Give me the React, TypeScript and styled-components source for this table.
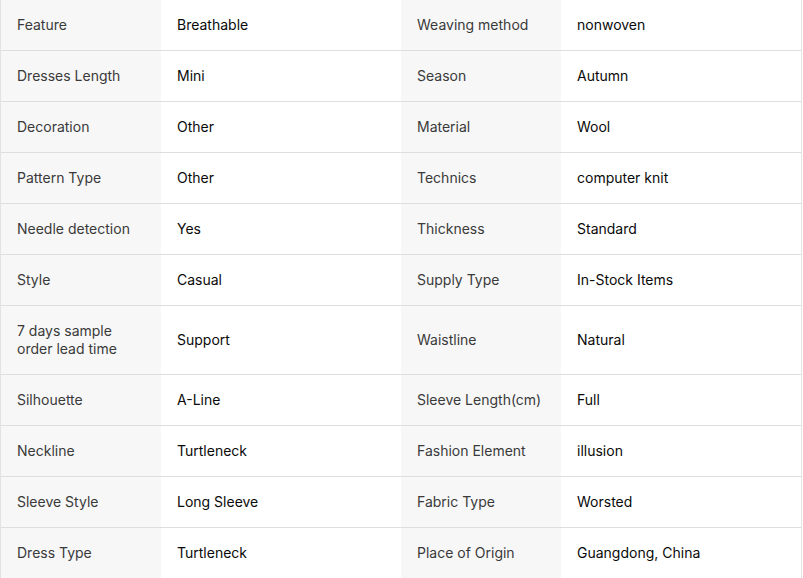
import React from "react";
import styled, { createGlobalStyle } from "styled-components";

const Global = createGlobalStyle`
  html, body { margin: 0; padding: 0; background: #fff; }
  body { font-family: Inter, "Noto Sans", sans-serif; }
`;

const Table = styled.div`
  width: 802px;
  box-sizing: border-box;
  border-left: 1px solid #e3e3e3;
  border-right: 1px solid #e3e3e3;
`;

const Row = styled.div`
  display: grid;
  grid-template-columns: 160px 240px 160px 240px;
  border-bottom: 1px solid #dedede;
`;

const Cell = styled.div<{ $label?: boolean }>`
  display: flex;
  align-items: center;
  box-sizing: border-box;
  padding: 16px 16px;
  font-size: 14px;
  line-height: 18px;
  background: ${(p) => (p.$label ? "#f7f7f7" : "#ffffff")};
  color: ${(p) => (p.$label ? "#3a3a3a" : "#0a0a0a")};
  font-weight: 400;
`;

const rows: [string, string, string, string][] = [
  ["Feature", "Breathable", "Weaving method", "nonwoven"],
  ["Dresses Length", "Mini", "Season", "Autumn"],
  ["Decoration", "Other", "Material", "Wool"],
  ["Pattern Type", "Other", "Technics", "computer knit"],
  ["Needle detection", "Yes", "Thickness", "Standard"],
  ["Style", "Casual", "Supply Type", "In-Stock Items"],
  ["7 days sample order lead time", "Support", "Waistline", "Natural"],
  ["Silhouette", "A-Line", "Sleeve Length(cm)", "Full"],
  ["Neckline", "Turtleneck", "Fashion Element", "illusion"],
  ["Sleeve Style", "Long Sleeve", "Fabric Type", "Worsted"],
  ["Dress Type", "Turtleneck", "Place of Origin", "Guangdong, China"],
];

export default function App() {
  return (
    <>
      <Global />
      <Table>
        {rows.map((r, i) => (
          <Row key={i}>
            <Cell $label>{r[0]}</Cell>
            <Cell>{r[1]}</Cell>
            <Cell $label>{r[2]}</Cell>
            <Cell>{r[3]}</Cell>
          </Row>
        ))}
      </Table>
    </>
  );
}
